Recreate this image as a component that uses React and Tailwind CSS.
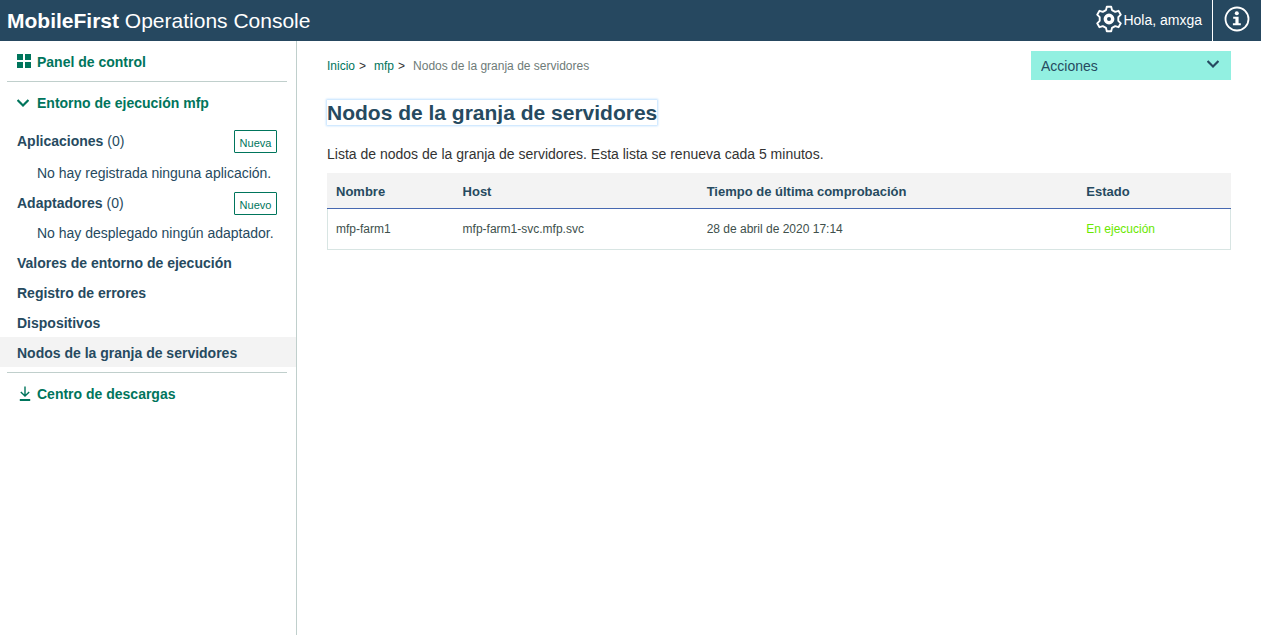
import React from "react";

function GearIcon() {
  return (
    <svg viewBox="0 0 28 28" className="h-7 w-7" fill="none" stroke="currentColor" aria-hidden="true">
      <path
        d="M11.800 1.800h4.400l.8 3.300 3.200 1.800 3.300-1.100 2.300 3.900-2.500 2.500v3.600l2.500 2.500-2.300 3.900-3.300-1.100-3.200 1.800-.8 3.300h-4.400l-.8-3.300-3.200-1.800-3.300 1.100-2.300-3.900 2.500-2.500v-3.600L2.200 9.700l2.300-3.900 3.300 1.100 3.200-1.800z"
        strokeWidth="1.900"
        strokeLinejoin="round"
      />
      <circle cx="14" cy="14" r="3.700" strokeWidth="3.400" />
    </svg>
  );
}

function InfoIcon() {
  return (
    <svg viewBox="0 0 26 26" className="h-[26px] w-[26px]" fill="none" aria-hidden="true">
      <circle cx="13" cy="13" r="11.500" stroke="currentColor" strokeWidth="1.800" />
      <circle cx="12.800" cy="7.300" r="2" fill="currentColor" />
      <path d="M9.200 10.700h5.400v6.600h2.200v2H8.900v-2h2.500v-4.600H9.200z" fill="currentColor" />
    </svg>
  );
}

function GridIcon() {
  return (
    <svg viewBox="0 0 14 14" className="h-3.5 w-3.5" fill="currentColor" aria-hidden="true">
      <path d="M0 0h6v6H0zM8 0h6v6H8zM0 8h6v6H0zM8 8h6v6H8z" />
    </svg>
  );
}

function ChevronIcon() {
  return (
    <svg viewBox="0 0 12 8" className="h-2 w-3" fill="none" stroke="currentColor" aria-hidden="true">
      <path d="M.6 1 6 6.400 11.400 1" strokeWidth="2.100" />
    </svg>
  );
}

function DownloadIcon() {
  return (
    <svg viewBox="0 0 12 16" className="h-4 w-3" fill="none" stroke="currentColor" aria-hidden="true">
      <path d="M6 .5v9.500M1.800 6 6 10.100 10.200 6" strokeWidth="1.400" />
      <path d="M.8 14h10.400" strokeWidth="2" />
    </svg>
  );
}

function SideRow({ title, count, action }) {
  return (
    <div className="flex h-[30px] items-center justify-between pt-0.5 pr-[19px] pl-[17px]">
      <a href="#" className="font-bold">
        {title} <span className="font-normal">({count})</span>
      </a>
      <button
        type="button"
        className="flex h-[23px] w-[43px] items-center justify-center rounded-[1px] border border-[#00755c] pt-1 text-[11px] leading-4 text-[#00755c]"
      >
        {action}
      </button>
    </div>
  );
}

const links = ["Valores de entorno de ejecución", "Registro de errores", "Dispositivos"];

export default function App() {
  return (
    <div className="flex min-h-screen flex-col bg-white font-['Liberation_Sans',Arial,sans-serif] text-sm text-[#264a60]">
      <header className="flex h-[41px] items-center justify-between bg-[#264860] pl-[7px] text-white">
        <div className="text-[21px] leading-7">
          <span className="font-bold">MobileFirst</span> Operations Console
        </div>
        <div className="flex h-full">
          <button type="button" className="flex items-center pr-2.5 pb-[3px]">
            <GearIcon />
            <span className="pt-0.5">Hola, amxga</span>
          </button>
          <button type="button" aria-label="Información" className="flex w-[49px] items-center justify-center border-l border-white pb-[3px]">
            <InfoIcon />
          </button>
        </div>
      </header>

      <div className="flex grow">
        <nav className="w-[297px] shrink-0 border-r border-[#c0cfcc]">
          <a href="#" className="flex h-10 items-center gap-1.5 pl-[17px] font-bold text-[#00755c]">
            <GridIcon />
            <span className="pt-0.5">Panel de control</span>
          </a>
          <hr className="mr-[9px] ml-[7px] border-[#c0cfcc]" />
          <button type="button" className="flex h-[42px] items-center gap-2 pl-[17px] font-bold text-[#00755c]">
            <ChevronIcon />
            Entorno de ejecución mfp
          </button>
          <div className="mt-px">
            <SideRow title="Aplicaciones" count={0} action="Nueva" />
            <p className="mt-0.5 flex h-[30px] items-center pt-0.5 pl-[37px]">No hay registrada ninguna aplicación.</p>
            <SideRow title="Adaptadores" count={0} action="Nuevo" />
            <p className="flex h-[30px] items-center pt-0.5 pl-[37px]">No hay desplegado ningún adaptador.</p>
            {links.map((link) => (
              <a key={link} href="#" className="flex h-[30px] items-center pt-0.5 pl-[17px] font-bold">
                {link}
              </a>
            ))}
            <a href="#" aria-current="page" className="flex h-[30px] items-center bg-[#f3f3f3] pt-0.5 pl-[17px] font-bold">
              Nodos de la granja de servidores
            </a>
          </div>
          <hr className="mt-[5px] mr-[9px] ml-[7px] border-[#c0cfcc]" />
          <a href="#" className="flex h-[42px] items-center gap-1.5 pl-[19px] font-bold text-[#00755c]">
            <DownloadIcon />
            Centro de descargas
          </a>
        </nav>

        <main className="min-w-0 grow px-[30px] pt-2.5">
          <div className="flex h-[29px] items-center justify-between">
            <ol className="flex items-center text-xs text-[#333]">
              <li>
                <a href="#" className="text-[#00755c]">Inicio</a>
                <span className="mr-2 ml-1">&gt;</span>
              </li>
              <li>
                <a href="#" className="text-[#00755c]">mfp</a>
                <span className="mr-2 ml-1">&gt;</span>
              </li>
              <li className="text-[#6e7b78]">Nodos de la granja de servidores</li>
            </ol>
            <div className="grid w-[200px] items-center bg-[#92f0e1]">
              <select aria-label="Acciones" className="col-start-1 row-start-1 h-[29px] w-full appearance-none pl-2.5">
                <option>Acciones</option>
              </select>
              <span className="pointer-events-none col-start-1 row-start-1 mr-3 mb-1 justify-self-end">
                <ChevronIcon />
              </span>
            </div>
          </div>

          <h1 className="mt-5 w-fit pt-px text-[21px] leading-6 font-bold shadow-[0_0_2px_1px_#bfe0ff]">
            Nodos de la granja de servidores
          </h1>
          <p className="mt-[19px] text-[#333]">Lista de nodos de la granja de servidores. Esta lista se renueva cada 5 minutos.</p>

          <table className="mt-[9px] w-full table-fixed border-separate border-spacing-0 text-left">
            <thead className="bg-[#f3f3f3] text-[13px]">
              <tr className="h-9">
                <th className="w-[14%] border-b border-[#4668b0] pt-1 pl-[9px]">Nombre</th>
                <th className="w-[27%] border-b border-[#4668b0] pt-1 pl-[9px]">Host</th>
                <th className="w-[42%] border-b border-[#4668b0] pt-1 pl-[9px]">Tiempo de última comprobación</th>
                <th className="w-[17%] border-b border-[#4668b0] pt-1 pl-[9px]">Estado</th>
              </tr>
            </thead>
            <tbody className="text-xs text-[#40504c]">
              <tr className="h-[41px]">
                <td className="border-b border-l border-[#d8e5e3] pl-2">mfp-farm1</td>
                <td className="border-b border-[#d8e5e3] pl-[9px]">mfp-farm1-svc.mfp.svc</td>
                <td className="border-b border-[#d8e5e3] pl-[9px]">28 de abril de 2020 17:14</td>
                <td className="border-r border-b border-[#d8e5e3] pl-[9px] text-[#6ae800]">En ejecución</td>
              </tr>
            </tbody>
          </table>
        </main>
      </div>
    </div>
  );
}
